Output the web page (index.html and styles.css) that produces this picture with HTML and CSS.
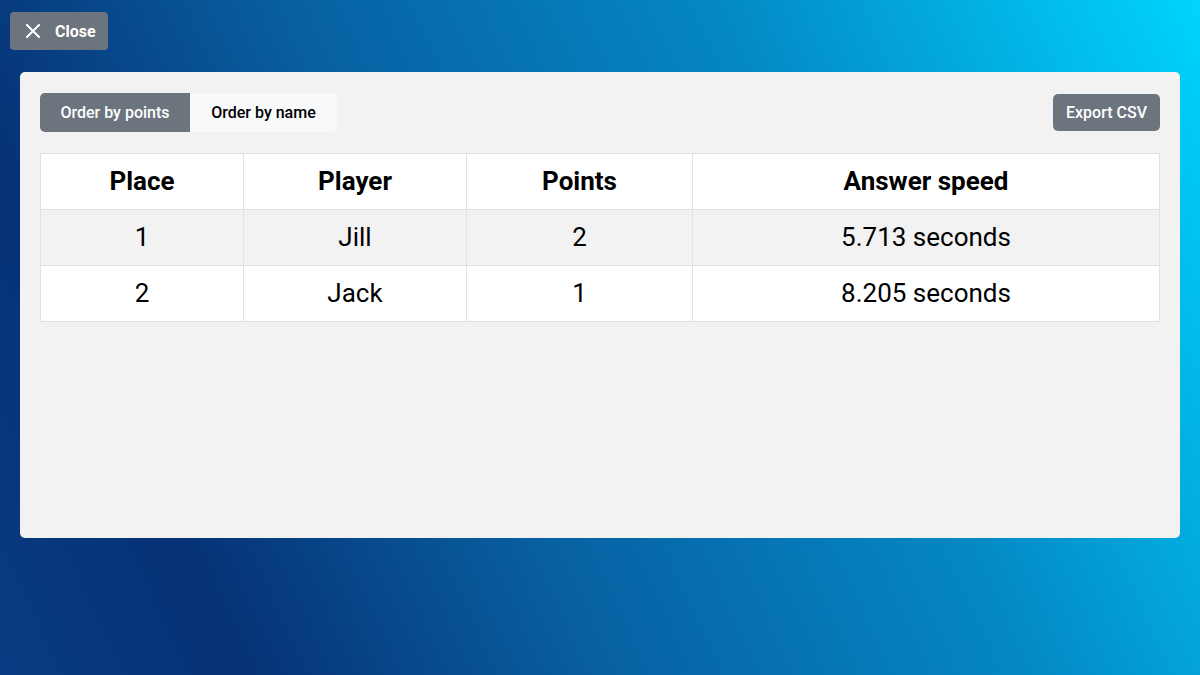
FILE: index.html
```html
<!DOCTYPE html>
<html>
<head>
<meta charset="utf-8">
<link rel="stylesheet" href="styles.css">
</head>
<body>
<div class="page">
  <div class="topbar">
    <button class="btn btn-close">
      <svg class="x-icon" width="14" height="14" viewBox="0 0 14 14"><path d="M1 1L13 13M13 1L1 13" stroke="#fff" stroke-width="2" stroke-linecap="square" fill="none"/></svg>
      <span>Close</span>
    </button>
  </div>
  <div class="panel">
    <div class="toolbar">
      <div class="btn-group">
        <button class="seg seg-active">Order by points</button>
        <button class="seg seg-light">Order by name</button>
      </div>
      <button class="btn btn-export">Export CSV</button>
    </div>
    <table class="results">
      <colgroup>
        <col class="c1"><col class="c2"><col class="c3"><col class="c4">
      </colgroup>
      <thead>
        <tr><th>Place</th><th>Player</th><th>Points</th><th>Answer speed</th></tr>
      </thead>
      <tbody>
        <tr class="odd"><td>1</td><td>Jill</td><td>2</td><td>5.713 seconds</td></tr>
        <tr><td>2</td><td>Jack</td><td>1</td><td>8.205 seconds</td></tr>
      </tbody>
    </table>
  </div>
</div>
</body>
</html>
```

FILE: styles.css
```css
html, body {
  margin: 0;
  padding: 0;
  height: 100%;
}
body {
  font-family: Roboto, "Liberation Sans", Arial, sans-serif;
  background: linear-gradient(65deg, #083c82 0%, #063275 16%, #0860a2 40%, #0488c4 68%, #00d4ff 100%);
  overflow: hidden;
}
.page {
  width: 1200px;
  height: 675px;
  box-sizing: border-box;
}
.topbar {
  padding: 12px 0 0 10px;
  height: 72px;
  box-sizing: border-box;
}
button {
  font-family: inherit;
  border: none;
  cursor: pointer;
}
.btn {
  background: #6c757d;
  color: #fff;
  border-radius: 4px;
  font-size: 16px;
  font-weight: 700;
}
.btn-close {
  display: flex;
  align-items: center;
  height: 38px;
  width: 98px;
  padding: 0 0 0 16px;
  box-sizing: border-box;
}
.x-icon {
  display: block;
  margin-right: 15px;
}
.panel {
  margin: 0 20px;
  height: 466px;
  background: #f2f2f2;
  border-radius: 5px;
  padding: 21px 20px;
  box-sizing: border-box;
}
.toolbar {
  display: flex;
  justify-content: space-between;
  align-items: center;
  margin-bottom: 21px;
}
.btn-group {
  display: flex;
  border-radius: 5px;
  overflow: hidden;
}
.seg {
  height: 39px;
  font-size: 16px;
  font-weight: 500;
  padding: 0;
}
.seg-active {
  width: 150px;
  background: #6c757d;
  color: #fff;
}
.seg-light {
  width: 147px;
  background: #f8f9fa;
  color: #000;
}
.btn-export {
  height: 37px;
  width: 107px;
  font-size: 16px;
  font-weight: 500;
  padding: 0;
  border-radius: 5px;
}
.results {
  width: 100%;
  border-collapse: collapse;
  table-layout: fixed;
  background: #fff;
  color: #000;
}
.c1 { width: 203px; }
.c2 { width: 223px; }
.c3 { width: 226px; }
.c4 { width: auto; }
.results th, .results td {
  border: 1px solid #dee2e6;
  height: 55px;
  padding: 0;
  text-align: center;
  vertical-align: middle;
  font-size: 26px;
  line-height: 1.1;
}
.results th {
  font-weight: 700;
}
.results td {
  font-weight: 400;
}
.results tr.odd td {
  background: #f2f2f2;
}
```
